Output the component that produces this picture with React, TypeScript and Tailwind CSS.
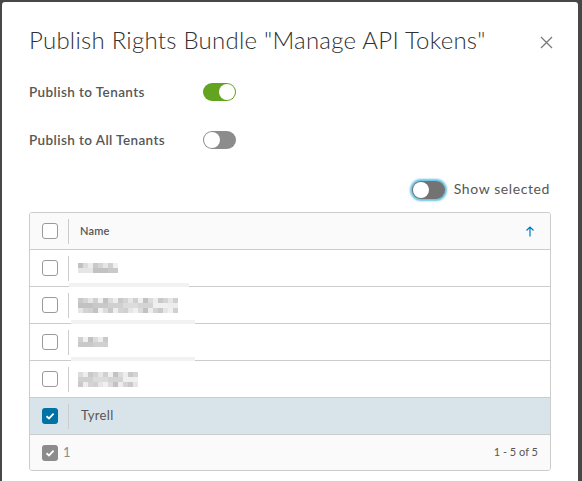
import React from 'react';

const FONT = { fontFamily: 'Lato, "Open Sans", sans-serif' };

const Check = () => (
  <svg width="10" height="8" viewBox="0 0 10 8">
    <polyline points="1.5,4.2 4,6.4 8.6,1.6" fill="none" stroke="#fff" strokeWidth="1.8" />
  </svg>
);

const Checkbox: React.FC<{ state?: 'off' | 'on' | 'gray' }> = ({ state = 'off' }) => {
  if (state === 'on')
    return <div className="w-4 h-4 rounded-[3px] bg-[#0072a3] flex items-center justify-center"><Check /></div>;
  if (state === 'gray')
    return <div className="w-4 h-4 rounded-[3px] bg-[#8c8c8c] flex items-center justify-center"><Check /></div>;
  return <div className="w-4 h-4 rounded-[3px] border border-[#9a9a9a] bg-white" />;
};

const Toggle: React.FC<{ on?: boolean; focus?: boolean }> = ({ on, focus }) => (
  <div
    className={
      'w-[33px] h-[18px] rounded-full flex items-center px-[1px] ' +
      (on ? 'bg-[#62a420] justify-end' : 'bg-[#8c8c8c] justify-start') +
      (focus ? ' bg-[#737373] shadow-[0_0_2px_2px_#6bc1e3]' : '')
    }
  >
    <div className="w-4 h-4 rounded-full bg-white" />
  </div>
);

// pixelated redaction blocks
const shades = ['#e6e6e6', '#d4d4d4', '#c9c9c9', '#ededed', '#dcdcdc', '#c2c2c2', '#f0f0f0', '#d0d0d0'];
const Pix: React.FC<{ cols: number; rows: number; seed: number }> = ({ cols, rows, seed }) => (
  <div className="flex flex-col">
    {Array.from({ length: rows }).map((_, r) => (
      <div key={r} className="flex">
        {Array.from({ length: cols }).map((_, c) => (
          <div
            key={c}
            className="w-[5px] h-[5px]"
            style={{ background: shades[(c * 7 + r * 3 + seed * 5 + ((c * r) % 3)) % shades.length] }}
          />
        ))}
      </div>
    ))}
  </div>
);

const rows = [
  { cols: 8, rows: 2, seed: 1, bar: 'left-[39px] w-[120px]' },
  { cols: 20, rows: 3, seed: 2, bar: 'left-[41px] w-[124px]' },
  { cols: 6, rows: 2, seed: 3, bar: 'left-[41px] w-[124px]' },
  { cols: 12, rows: 3, seed: 4, bar: '' },
];

export default function App() {
  return (
    <div className="w-[582px] h-[481px] overflow-hidden bg-[#474747] pt-[2px] pl-[2px] pr-[4px]" style={FONT}>
      <div className="bg-white rounded-t-[3px] h-[520px] px-[27px]">
        <div className="flex items-start justify-between pt-[22px]">
          <h1 className="text-[24px] leading-[32px] font-light tracking-[0.25px] text-[#313131]">
            Publish Rights Bundle "Manage API Tokens"
          </h1>
          <svg width="13" height="13" viewBox="0 0 13 13" className="mt-[12px] mr-[-2px]">
            <path d="M1 1 L12 12 M12 1 L1 12" stroke="#7a7a7a" strokeWidth="1.3" />
          </svg>
        </div>

        <div className="mt-[24px] flex flex-col gap-6">
          <div className="flex items-center h-6">
            <span className="w-[174px] text-[13.5px] tracking-[0.4px] font-semibold text-[#565656]">Publish to Tenants</span>
            <Toggle on />
          </div>
          <div className="flex items-center h-6">
            <span className="w-[174px] text-[13.5px] tracking-[0.4px] font-semibold text-[#565656]">Publish to All Tenants</span>
            <Toggle />
          </div>
        </div>

        <div className="mt-[26px] flex items-center justify-end h-6 gap-[9px]">
          <Toggle focus />
          <span className="text-[14px] tracking-[0.6px] text-[#565656] mr-[1px] mb-[3px]">Show selected</span>
        </div>

        <div className="mt-[10px] border border-[#cccccc] rounded-[3px] overflow-hidden">
          <div className="h-[37px] bg-[#fafafa] border-b border-[#cccccc] flex items-center">
            <div className="w-[38px] pl-[12px]"><Checkbox /></div>
            <div className="w-px h-[25px] bg-[#cccccc]" />
            <span className="pl-[11px] flex-1 text-[11px] tracking-[0.2px] font-semibold text-[#565656]">Name</span>
            <svg width="10" height="11" viewBox="0 0 10 11" className="mr-[15px]">
              <path d="M5 10.5 V1 M1.5 4.5 L5 1 L8.5 4.5" fill="none" stroke="#0079b8" strokeWidth="1.2" />
            </svg>
          </div>

          {rows.map((r, i) => (
            <div key={i} className="relative h-[37px] border-b border-[#cccccc] flex items-center">
              <div className="w-[38px] pl-[12px]"><Checkbox /></div>
              <div className="w-px h-[25px] bg-[#cccccc]" />
              <div className="pl-[9px]"><Pix cols={r.cols} rows={r.rows} seed={r.seed} /></div>
              {r.bar && <div className={'absolute bottom-[-1px] h-[4px] bg-[#f2f2f2] ' + r.bar} />}
            </div>
          ))}

          <div className="h-[37px] bg-[#d9e4ea] border-b border-[#cccccc] flex items-center">
            <div className="w-[38px] pl-[12px]"><Checkbox state="on" /></div>
            <div className="w-px h-[25px] bg-[#cccccc]" />
            <span className="pl-[12px] text-[13px] tracking-[0.3px] text-[#565656]">Tyrell</span>
          </div>

          <div className="h-[35px] bg-[#fafafa] flex items-center">
            <div className="pl-[12px]"><Checkbox state="gray" /></div>
            <span className="pl-[5px] flex-1 text-[13px] text-[#8c8c8c]">1</span>
            <span className="pr-[12px] text-[11px] text-[#565656]">1 - 5 of 5</span>
          </div>
        </div>
      </div>
    </div>
  );
}
